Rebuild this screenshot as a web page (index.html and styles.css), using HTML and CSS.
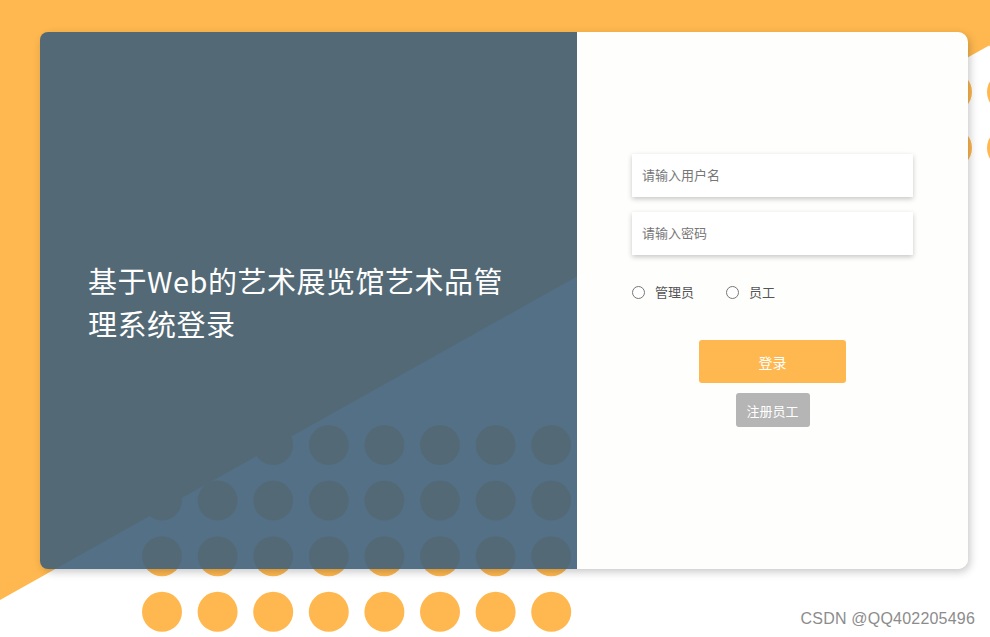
FILE: index.html
```html
<!DOCTYPE html>
<html lang="zh-CN">
<head>
<meta charset="utf-8">
<title>登录</title>
<link rel="stylesheet" href="styles.css">
</head>
<body>
<svg class="bg" width="990" height="637" viewBox="0 0 990 637" aria-hidden="true">
  <polygon points="0,0 990,0 990,45 0,600" fill="#FFB84F"/>
  <g fill="#FFB84F">
    <circle cx="952" cy="36" r="20"/><circle cx="1007" cy="36" r="20"/>
    <circle cx="952" cy="92" r="20"/><circle cx="1007" cy="92" r="20"/>
    <circle cx="952" cy="148" r="20"/><circle cx="1007" cy="148" r="20"/>
  </g>
  <g fill="#FFB84F">
    <circle cx="162" cy="445" r="20"/><circle cx="217.6" cy="445" r="20"/><circle cx="273.2" cy="445" r="20"/><circle cx="328.8" cy="445" r="20"/><circle cx="384.4" cy="445" r="20"/><circle cx="440" cy="445" r="20"/><circle cx="495.6" cy="445" r="20"/><circle cx="551.2" cy="445" r="20"/>
    <circle cx="162" cy="500.6" r="20"/><circle cx="217.6" cy="500.6" r="20"/><circle cx="273.2" cy="500.6" r="20"/><circle cx="328.8" cy="500.6" r="20"/><circle cx="384.4" cy="500.6" r="20"/><circle cx="440" cy="500.6" r="20"/><circle cx="495.6" cy="500.6" r="20"/><circle cx="551.2" cy="500.6" r="20"/>
    <circle cx="162" cy="556.2" r="20"/><circle cx="217.6" cy="556.2" r="20"/><circle cx="273.2" cy="556.2" r="20"/><circle cx="328.8" cy="556.2" r="20"/><circle cx="384.4" cy="556.2" r="20"/><circle cx="440" cy="556.2" r="20"/><circle cx="495.6" cy="556.2" r="20"/><circle cx="551.2" cy="556.2" r="20"/>
    <circle cx="162" cy="611.8" r="20"/><circle cx="217.6" cy="611.8" r="20"/><circle cx="273.2" cy="611.8" r="20"/><circle cx="328.8" cy="611.8" r="20"/><circle cx="384.4" cy="611.8" r="20"/><circle cx="440" cy="611.8" r="20"/><circle cx="495.6" cy="611.8" r="20"/><circle cx="551.2" cy="611.8" r="20"/>
  </g>
</svg>

<main class="page">
  <section class="card">
    <div class="intro">
      <h1 class="title">基于Web的艺术展览馆艺术品管理系统登录</h1>
    </div>
    <form class="panel" onsubmit="return false;">
      <div class="fields">
        <input class="field" type="text" placeholder="请输入用户名">
        <input class="field" type="password" placeholder="请输入密码">
        <div class="roles">
          <label class="role"><input type="radio" name="role" class="radio"><span>管理员</span></label>
          <label class="role"><input type="radio" name="role" class="radio"><span>员工</span></label>
        </div>
        <button class="btn-login" type="submit">登录</button>
        <button class="btn-register" type="button">注册员工</button>
      </div>
    </form>
  </section>
</main>

<div class="watermark">CSDN @QQ402205496</div>
</body>
</html>
```

FILE: styles.css
```css
html, body {
  margin: 0;
  padding: 0;
}

body {
  width: 990px;
  height: 637px;
  overflow: hidden;
  background: #ffffff;
  font-family: "Noto Sans CJK SC", "Noto Sans", sans-serif;
  position: relative;
}

.bg {
  position: absolute;
  left: 0;
  top: 0;
  z-index: 0;
}

.page {
  position: relative;
  z-index: 1;
  padding: 32px 0 0 40px;
}

.card {
  display: flex;
  width: 928px;
  height: 537px;
  border-radius: 10px;
  box-shadow: 2px 3px 8px rgba(0, 0, 0, 0.22);
}

.intro {
  width: 537px;
  box-sizing: border-box;
  padding: 0 48px;
  display: flex;
  align-items: center;
  background: rgba(64, 97, 122, 0.9);
  border-radius: 8px 0 0 8px;
}

.title {
  margin: 0;
  padding-top: 2px;
  width: 430px;
  color: #ffffff;
  font-size: 29px;
  font-weight: 400;
  line-height: 43px;
  letter-spacing: 0.5px;
}

.panel {
  flex: 1;
  margin: 0;
  background: #fefefd;
  border-radius: 0 10px 10px 0;
  display: flex;
  justify-content: center;
  padding-top: 122px;
  box-sizing: border-box;
}

.fields {
  width: 281px;
  display: flex;
  flex-direction: column;
  align-items: center;
}

.field {
  width: 281px;
  height: 43px;
  box-sizing: border-box;
  border: none;
  outline: none;
  background: #ffffff;
  box-shadow: 0 2px 5px rgba(0, 0, 0, 0.22);
  padding: 0 10px 2px;
  font-family: "Noto Sans CJK SC", sans-serif;
  font-size: 13px;
  color: #333;
  margin-bottom: 15px;
}

.field::placeholder {
  color: #777777;
}

.roles {
  align-self: flex-start;
  display: flex;
  gap: 32px;
  height: 44px;
}

.role {
  display: flex;
  align-items: center;
  height: 44px;
  font-size: 13px;
  color: #555555;
  line-height: 14px;
}

.role span {
  margin-left: 10px;
}

.radio {
  margin: 0;
  width: 13px;
  height: 13px;
}

.btn-login {
  margin-top: 26px;
  width: 147px;
  height: 43px;
  border: none;
  border-radius: 3px;
  background: #FFB84F;
  color: #ffffff;
  font-family: "Noto Sans CJK SC", sans-serif;
  font-size: 14px;
  cursor: pointer;
}

.btn-register {
  margin-top: 10px;
  width: 74px;
  height: 34px;
  border: none;
  border-radius: 3px;
  background: #b5b5b5;
  color: #ffffff;
  font-family: "Noto Sans CJK SC", sans-serif;
  font-size: 13px;
  cursor: pointer;
}

.watermark {
  position: absolute;
  right: 15px;
  bottom: 9px;
  z-index: 2;
  font-family: "Liberation Sans", Arial, sans-serif;
  font-size: 16px;
  color: #8c8c8c;
  letter-spacing: 0.2px;
}
```
